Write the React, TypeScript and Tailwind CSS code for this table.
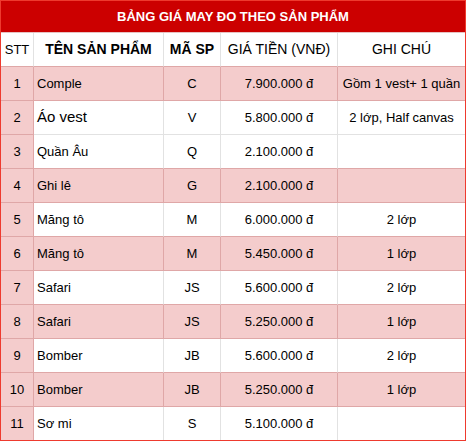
import React from "react";

type Row = { stt: string; name: string; code: string; price: string; note: string; big?: boolean };

const rows: Row[] = [
  { stt: "1", name: "Comple", code: "C", price: "7.900.000 đ", note: "Gồm 1 vest+ 1 quần" },
  { stt: "2", name: "Áo vest", code: "V", price: "5.800.000 đ", note: "2 lớp, Half canvas", big: true },
  { stt: "3", name: "Quần Âu", code: "Q", price: "2.100.000 đ", note: "" },
  { stt: "4", name: "Ghi lê", code: "G", price: "2.100.000 đ", note: "" },
  { stt: "5", name: "Măng tô", code: "M", price: "6.000.000 đ", note: "2 lớp" },
  { stt: "6", name: "Măng tô", code: "M", price: "5.450.000 đ", note: "1 lớp" },
  { stt: "7", name: "Safari", code: "JS", price: "5.600.000 đ", note: "2 lớp" },
  { stt: "8", name: "Safari", code: "JS", price: "5.250.000 đ", note: "1 lớp" },
  { stt: "9", name: "Bomber", code: "JB", price: "5.600.000 đ", note: "2 lớp" },
  { stt: "10", name: "Bomber", code: "JB", price: "5.250.000 đ", note: "1 lớp" },
  { stt: "11", name: "Sơ mi", code: "S", price: "5.100.000 đ", note: "" },
];

const pinkRows = [true, false, false, true, false, true, false, true, false, true, false];

const widths = ["w-[33px]", "w-[130px]", "w-[57px]", "w-[117px]", "w-[127px]"];

export default function App() {
  return (
    <div className="w-[468px] h-[442px] bg-white" style={{ fontFamily: '"Liberation Sans", Arial, sans-serif' }}>
      <div className="w-[466px] border-l border-t border-b border-r border-[#ee3a2e] flex flex-col text-black">
        <div className="h-[32px] bg-[#cc0000] border-b border-b-[#e6c2c2] flex items-center justify-center text-white font-bold text-[13px]">
          BẢNG GIÁ MAY ĐO THEO SẢN PHẨM
        </div>
        <div className="flex h-[34px] bg-white">
          <div className="w-[33px] h-[34px] shrink-0 border-r border-b border-r-[#e2e2e2] border-b-[#dfa7a7] flex items-center justify-center text-[13px]">STT</div>
          <div className="w-[130px] h-[34px] shrink-0 border-r border-b border-r-[#e2e2e2] border-b-[#dfa7a7] flex items-center justify-center text-[14px] font-bold">TÊN SẢN PHẨM</div>
          <div className="w-[57px] h-[34px] shrink-0 border-r border-b border-r-[#e2e2e2] border-b-[#dfa7a7] flex items-center justify-center text-[14px] font-bold">MÃ SP</div>
          <div className="w-[117px] h-[34px] shrink-0 border-r border-b border-r-[#e2e2e2] border-b-[#dfa7a7] flex items-center justify-center text-[14px] whitespace-nowrap">GIÁ TIỀN (VNĐ)</div>
          <div className="w-[127px] h-[34px] shrink-0 border-b border-b-[#dfa7a7] flex items-center justify-center text-[14px]">GHI CHÚ</div>
        </div>
        {rows.map((r, i) => {
          const pink = pinkRows[i];
          const last = i === rows.length - 1;
          const nextPink = !last && pinkRows[i + 1];
          const cells = [r.stt, r.name, r.code, r.price, r.note];
          return (
            <div key={i} className={last ? "flex h-[33px]" : "flex h-[34px]"}>
              {cells.map((c, j) => {
                const cellPink = j === 0 || pink;
                const belowPink = !last && (j === 0 || nextPink);
                const rightPink = j < 4 && (cellPink || pink);
                const bg = cellPink ? "bg-[#f4cccc]" : "bg-white";
                const bb = last ? "" : cellPink || belowPink ? "border-b border-b-[#dfa7a7]" : "border-b border-b-[#e2e2e2]";
                const br = j === 4 ? "" : rightPink ? "border-r border-r-[#dfa7a7]" : "border-r border-r-[#e2e2e2]";
                const align = j === 1 ? "justify-start pl-[3px]" : "justify-center";
                const size = j === 1 && r.big ? "text-[15px]" : "text-[13px]";
                return (
                  <div
                    key={j}
                    className={`${widths[j]} shrink-0 h-full flex items-center whitespace-nowrap overflow-visible ${bg} ${bb} ${br} ${align} ${size}`}
                  >
                    {c}
                  </div>
                );
              })}
            </div>
          );
        })}
      </div>
    </div>
  );
}
